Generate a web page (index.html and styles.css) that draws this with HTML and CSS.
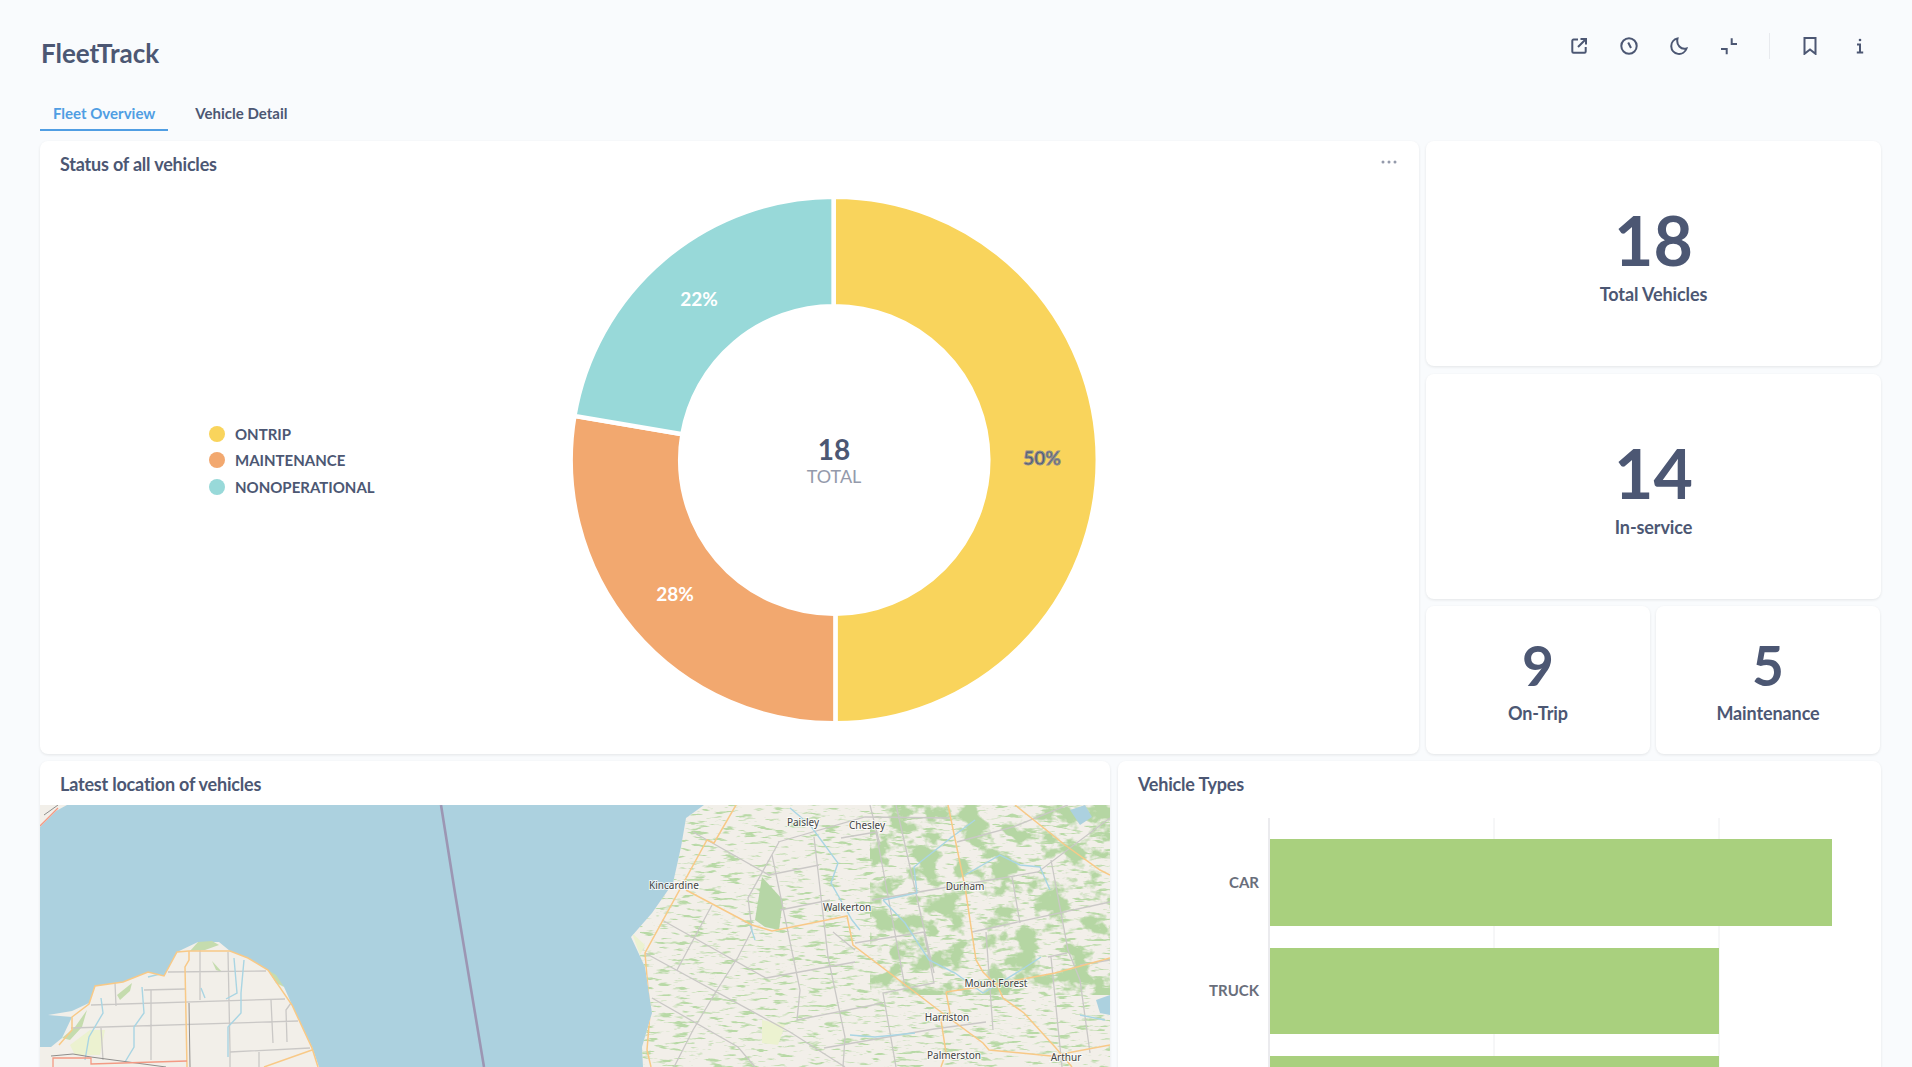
FILE: index.html
```html
<!DOCTYPE html>
<html>
<head>
<meta name="viewport" content="width=device-width, initial-scale=1">
<title>FleetTrack</title>
<link rel="stylesheet" href="styles.css">
</head>
<body>

  <header class="header">
    <h1 class="title">FleetTrack</h1>
    <div class="actions">
      <span class="action"><svg class="icon" viewBox="0 0 18 18"><path d="M8 2.500H3.500a1.200 1.200 0 0 0-1.200 1.200v10.800a1.200 1.200 0 0 0 1.200 1.200h11a1.200 1.200 0 0 0 1.200-1.200V10"/><path d="M8 10L15.500 2.500M10.500 2h5.500v5.500"/></svg></span>
      <span class="action"><svg class="icon" viewBox="0 0 18 18"><circle cx="9" cy="9" r="7.700"/><path d="M8.200 5.500L11 11"/></svg></span>
      <span class="action"><svg class="icon" viewBox="0 0 18 18"><path d="M7.500 1.500A7.800 7.800 0 1 0 16.500 11.500C11 13 6 8 7.500 1.500Z"/></svg></span>
      <span class="action"><svg class="icon" viewBox="0 0 18 18"><path d="M11.700 1.300V7H17M1 12H6.700V17.300"/></svg></span>
      <span class="divider"></span>
      <span class="action"><svg class="icon" viewBox="0 0 18 18"><path d="M3.500 1h11v15.800L9 12.500L3.500 16.800Z"/></svg></span>
      <span class="action"><svg class="icon" viewBox="0 0 18 18"><circle class="dot" cx="9" cy="3" r="1.300"/><path d="M6 7.500H9V15.500M5.800 15.500H12.200"/></svg></span>
    </div>
  </header>

  <nav class="tabs">
    <a class="tab active">Fleet Overview</a>
    <a class="tab">Vehicle Detail</a>
  </nav>

  <main class="dashboard">
    <section class="top-row">
      <div class="card status-card">
        <div class="card-head">
          <h2>Status of all vehicles</h2>
          <svg class="more" viewBox="0 0 16 4"><circle cx="2" cy="2" r="1.500"/><circle cx="8" cy="2" r="1.500"/><circle cx="14" cy="2" r="1.500"/></svg>
        </div>
        <div class="status-body">
          <ul class="legend">
            <li><span class="swatch ontrip"></span>ONTRIP</li>
            <li><span class="swatch maint"></span>MAINTENANCE</li>
            <li><span class="swatch nonop"></span>NONOPERATIONAL</li>
          </ul>
          <svg class="donut" viewBox="-264 -264 528 528">
            <path class="slice" fill="#f9d45c" d="M-0.400 -263.300A263.300 263.300 0 0 1 1.400 263.300L1.400 153.800A153.800 153.800 0 0 0 -0.400 -153.800Z"/>
            <path class="slice" fill="#f2a86f" d="M1.400 263.300A263.300 263.300 0 0 1 -259.600 -44.100L-151.600 -25.800A153.800 153.800 0 0 0 1.400 153.800Z"/>
            <path class="slice" fill="#98d9d9" d="M-259.600 -44.100A263.300 263.300 0 0 1 -0.400 -263.300L-0.400 -153.800A153.800 153.800 0 0 0 -151.600 -25.800Z"/>
            <text class="pct dark" x="208" y="5">50%</text>
            <text class="pct" x="-159" y="141">28%</text>
            <text class="pct" x="-135" y="-154">22%</text>
            <text class="center-num" x="0" y="0">18</text>
            <text class="center-label" x="0" y="22.500">TOTAL</text>
          </svg>
        </div>
      </div>

      <div class="stats">
        <div class="card stat wide"><div class="stat-num">18</div><div class="stat-label">Total Vehicles</div></div>
        <div class="card stat wide"><div class="stat-num">14</div><div class="stat-label">In-service</div></div>
        <div class="card stat small"><div class="stat-num">9</div><div class="stat-label">On-Trip</div></div>
        <div class="card stat small"><div class="stat-num">5</div><div class="stat-label">Maintenance</div></div>
      </div>
    </section>

    <section class="bottom-row">
      <div class="card map-card">
        <div class="card-head"><h2>Latest location of vehicles</h2></div>
        <svg class="map" viewBox="0 0 1070 262">
          <defs>
            <filter id="fields" x="0" y="0" width="100%" height="100%" color-interpolation-filters="sRGB">
              <feTurbulence type="fractalNoise" baseFrequency="0.06 0.3" numOctaves="3" seed="7"/>
              <feColorMatrix values="0 0 0 0 .72  0 0 0 0 .85  0 0 0 0 .65  7 0 0 0 -3.950"/>
              <feGaussianBlur stdDeviation="0.4"/>
            </filter>
            <filter id="woods" x="0" y="0" width="100%" height="100%" color-interpolation-filters="sRGB">
              <feTurbulence type="fractalNoise" baseFrequency="0.04 0.055" numOctaves="4" seed="12"/>
              <feColorMatrix values="0 0 0 0 .71  0 0 0 0 .84  0 0 0 0 .64  8 0 0 0 -3.900"/>
              <feGaussianBlur stdDeviation="0.4"/>
            </filter>
            <clipPath id="east-land">
              <path d="M664 0L646 13L641 42L633 78L612 108L591 132L605 162L612 208L602 242L603 262H1070V0Z"/>
            </clipPath>
          </defs>

          <rect class="water" width="1070" height="262"/>

          <!-- west peninsula -->
          <path class="land" d="M0 0H27L16 6L0 22Z"/>
          <path class="land" d="M0 242L11 242L22 233L32 212L8 210L32 206L49 198L55 181L83 177L108 167L124 171L137 147L158 137L179 137L190 146L208 153L228 165L244 182L252 200L272 242L279 262H0Z"/>
          <path class="green" d="M150 146L158 137L172 136L179 140L165 145Z"/>
          <path class="green" d="M228 165L236 170L244 182L236 178Z"/>
          <path class="green" d="M77 190L92 178L90 186L80 195Z"/>
          <path class="green" d="M22 233L35 222L47 205L42 222L30 235Z"/>
          <path class="pale" d="M30 240L50 225L65 225L60 250L35 250Z"/>
          <path class="green" d="M172 156L182 167L176 165Z"/>

          <g class="grey">
            <path d="M128 167L226 166M160 145V195M188 147L190 245V262M51 200L245 194M104 185L145 184M75 178L76 201"/>
            <path d="M111 185V255M31 223L258 216M61 223L63 255M231 195L233 238M247 237L246 205L251 198M190 247L270 243M219 247V262"/>
          </g>
          <g class="river">
            <path d="M61 193L63 208L49 232L45 255M102 182L104 208L94 222L94 242L85 257M108 172L124 168M194 153L197 188L186 194"/>
            <path d="M204 155L201 188L201 208L188 222L188 252M161 183L165 193"/>
          </g>
          <g class="orange">
            <path d="M19 240L32 225V212L49 199L55 181L83 177L108 167L124 171L137 147L149 146H190L208 153L228 165L252 200L272 243L278 262"/>
            <path d="M149 146V155L145 162L147 262M224 262L272 245"/>
          </g>
          <path class="dark" d="M11 251L33 249L51 252L126 262M149 198L150 262M4 10L18 0"/>
          <path class="red" d="M13 262V253H51V259L147 256M0 21L18 3"/>

          <!-- lake boundary -->
          <path class="boundary" d="M401 0L415 88L444 262"/>

          <!-- east land -->
          <path class="land" d="M664 0L646 13L641 42L633 78L612 108L591 132L605 162L612 208L602 242L603 262H1070V0Z"/>
          <g clip-path="url(#east-land)">
            <rect filter="url(#fields)" x="600" y="0" width="470" height="262"/>
            <rect filter="url(#woods)" x="830" y="0" width="240" height="190"/>
            <path class="forest" d="M715 115L722 72L743 95L739 125L725 122Z"/>
            <path class="pale" d="M592 128L605 140L600 150Z"/>
            <path class="pale" d="M722 215L745 220L738 240L722 238Z"/>

            <g class="grey">
              <path d="M653 27L729 70L779 60M739 37L708 93L712 125L698 152L677 185L653 225L634 262M622 115L726 173L815 157M672 100L637 165"/>
              <path d="M605 148L750 227L805 262M612 193L698 242L715 262M774 32L788 152L805 232L803 262M732 50L760 185L757 215L843 198"/>
              <path d="M801 33L836 27L865 182M793 127L815 145M815 138L884 127L894 178L843 188L856 262M856 0L894 168M784 243L894 224L946 217"/>
              <path d="M738 37L825 12L910 13M917 37L973 22L1028 0M832 95L908 82L998 67L1070 13M932 127L1070 97M1008 152L1027 148M1011 152L1022 262"/>
              <path d="M946 127L953 225M972 72L980 118M1011 55L1028 145L1040 175L1050 248M1040 160L1070 155M740 105L790 95M840 40L830 0"/>
            </g>
            <g class="river">
              <path d="M750 3L770 20L798 58L791 78L812 115L820 125M843 95L877 88L874 62L912 32L935 15"/>
              <path d="M843 95L865 118L889 155L915 168L943 188L981 165L1001 152M925 70L960 50L980 60L1000 62L1010 85"/>
              <path d="M810 230L835 232L875 228M710 120L715 135M1040 210L1065 215"/>
            </g>
            <path class="small-lake" d="M1030 5L1045 0L1052 12L1040 20Z"/>
            <path class="small-lake" d="M1056 195L1070 190V210L1060 208Z"/>
            <g class="orange">
              <path d="M696 0L674 38L667 35L605 148L610 208L607 245L611 262"/>
              <path d="M646 85L712 120L732 126L807 111L813 140L901 207L943 238L949 245L1011 251L1070 240"/>
              <path d="M908 0L925 82L936 155L943 167L958 182L963 193L984 208L1015 242L1032 262"/>
              <path d="M906 187L939 182L1015 168L1070 153M906 187L910 208L901 215L906 248L901 262M975 0L1025 40L1060 65L1070 70"/>
            </g>
          </g>

          <g class="place">
            <text x="634" y="84">Kincardine</text>
            <text x="763" y="21">Paisley</text>
            <text x="827" y="24">Chesley</text>
            <text x="925" y="85">Durham</text>
            <text x="807" y="106">Walkerton</text>
            <text x="956" y="182">Mount Forest</text>
            <text x="907" y="216">Harriston</text>
            <text x="914" y="254">Palmerston</text>
            <text x="1026" y="256">Arthur</text>
          </g>
        </svg>
      </div>

      <div class="card types-card">
        <div class="card-head"><h2>Vehicle Types</h2></div>
        <svg class="bars" viewBox="0 0 763 262">
          <path class="axis" d="M151 13V262"/>
          <path class="gridline" d="M376 13V262M601 13V262"/>
          <rect class="bar" x="152" y="34" width="562" height="87"/>
          <rect class="bar" x="152" y="143" width="449" height="86"/>
          <rect class="bar" x="152" y="251" width="449" height="11"/>
          <text class="bar-label" x="141" y="83">CAR</text>
          <text class="bar-label" x="141" y="191">TRUCK</text>
        </svg>
      </div>
    </section>
  </main>

</body>
</html>
```

FILE: styles.css
```css
* {
  box-sizing: border-box;
}

html, body {
  height: 100%;
}

body {
  margin: 0;
  overflow: hidden;
  background-color: #f9fbfd;
  font-family: Lato, "Liberation Sans", sans-serif;
  font-weight: 700;
  color: #4c5773;
}

h1, h2, ul {
  margin: 0;
  padding: 0;
}

/* Page header */
.header {
  display: flex;
  justify-content: space-between;
  padding: 33px 27px 0 41px;
}

.title {
  margin-top: 3px;
  font-size: 26px;
  line-height: 34px;
}

.actions {
  display: flex;
  align-items: center;
  height: 26px;
}

.action {
  display: flex;
  justify-content: center;
  width: 50px;
}

.icon {
  width: 18px;
  height: 18px;
  fill: none;
  stroke: #4c5773;
  stroke-width: 2;
}

.icon .dot {
  fill: #4c5773;
  stroke: none;
}

.divider {
  width: 1px;
  height: 26px;
  margin: 0 15px;
  background-color: #e8eaee;
}

/* Tabs */
.tabs {
  display: flex;
  gap: 14px;
  margin: 31px 0 10px 40px;
}

.tab {
  padding: 0 13px 4px;
  border-bottom: 2px solid transparent;
  font-size: 15px;
  line-height: 24px;
}

.tab.active {
  color: #509ee3;
  border-bottom-color: #509ee3;
}

/* Cards */
.dashboard {
  display: flex;
  flex-direction: column;
  gap: 7px;
  padding: 0 31px 0 40px;
}

.top-row {
  display: grid;
  grid-template-columns: 1379px 455px;
  gap: 7px;
  height: 613px;
}

.bottom-row {
  display: grid;
  grid-template-columns: 1070px 763px;
  gap: 8px;
  height: 320px;
}

.card {
  background-color: white;
  border-radius: 8px;
  box-shadow: 0 1px 3px rgba(0, 0, 0, 0.09);
  overflow: hidden;
}

.card-head {
  display: flex;
  justify-content: space-between;
  height: 44px;
  padding: 12px 20px;
}

.card-head h2 {
  font-size: 18px;
  line-height: 23px;
  letter-spacing: -0.2px;
}

.more {
  width: 16px;
  height: 4px;
  margin: 7px 2px 0 0;
  fill: #949aab;
}

/* Donut panel */
.status-body {
  display: flex;
  align-items: center;
  height: 528px;
  margin-top: 11px;
  padding-left: 169px;
}

.legend {
  width: 361px;
  list-style: none;
}

.legend li {
  display: flex;
  align-items: center;
  gap: 10px;
  height: 26.500px;
  font-size: 15px;
}

.swatch {
  width: 16px;
  height: 16px;
  border-radius: 50%;
}

.ontrip { background-color: #f9d45c; }
.maint { background-color: #f2a86f; }
.nonop { background-color: #98d9d9; }

.donut {
  width: 528px;
  height: 528px;
}

.slice {
  stroke: white;
  stroke-width: 4.500;
}

.donut text {
  text-anchor: middle;
}

.pct {
  fill: white;
  font-size: 19px;
}

.pct.dark {
  fill: #4c5773;
}

.center-num {
  fill: #4c5773;
  font-size: 28px;
}

.center-label {
  fill: #949aab;
  font-size: 18px;
  font-weight: 400;
}

/* Number cards */
.stats {
  display: grid;
  grid-template-columns: 224px 224px;
  grid-template-rows: 225px 225px 148px;
  gap: 7.500px 6px;
}

.stat {
  display: flex;
  flex-direction: column;
  align-items: center;
  justify-content: center;
}

.stat.wide {
  grid-column: span 2;
  width: 455px;
  padding-top: 3px;
}

.stat-num {
  font-size: 68px;
  line-height: 72px;
}

.stat-label {
  margin-top: 6px;
  font-size: 18px;
  line-height: 24px;
  letter-spacing: -0.1px;
}

.stat.small {
  padding-top: 0.500px;
}

.stat.small .stat-num {
  font-size: 55px;
  line-height: 58px;
}

.stat.small .stat-label {
  margin-top: 6.500px;
}

/* Map */
.map {
  display: block;
  width: 1070px;
  height: 262px;
  fill: none;
}

.water { fill: #acd1df; }
.land { fill: #f2efe9; }
.green { fill: #c5dcae; }
.pale { fill: #ecf2d0; }
.forest { fill: #b6d6a6; }
.small-lake { fill: #acd1df; }

.grey path {
  stroke: #cac8c6;
  stroke-width: 1.300;
}

.river path {
  stroke: #a9d5e3;
  stroke-width: 1.400;
}

.orange path {
  stroke: #f8c987;
  stroke-width: 1.500;
}

.dark {
  stroke: #8f8d8b;
  stroke-width: 1;
}

.red {
  stroke: #f39a84;
  stroke-width: 1.300;
}

.boundary {
  stroke: #9c96b3;
  stroke-width: 2.600;
}

.place text {
  fill: #444;
  stroke: rgba(255, 255, 255, 0.75);
  stroke-width: 2px;
  paint-order: stroke;
  font-family: "Noto Sans", sans-serif;
  font-size: 10px;
  font-weight: 400;
  text-anchor: middle;
}

/* Bars */
.bars {
  display: block;
  width: 763px;
  height: 262px;
}

.axis {
  stroke: #e4e5e9;
  stroke-width: 1.500;
}

.gridline {
  stroke: #edeef0;
  stroke-width: 1;
}

.bar {
  fill: #a9d07e;
}

.bar-label {
  fill: #696e7b;
  font-size: 15px;
  text-anchor: end;
}
```
